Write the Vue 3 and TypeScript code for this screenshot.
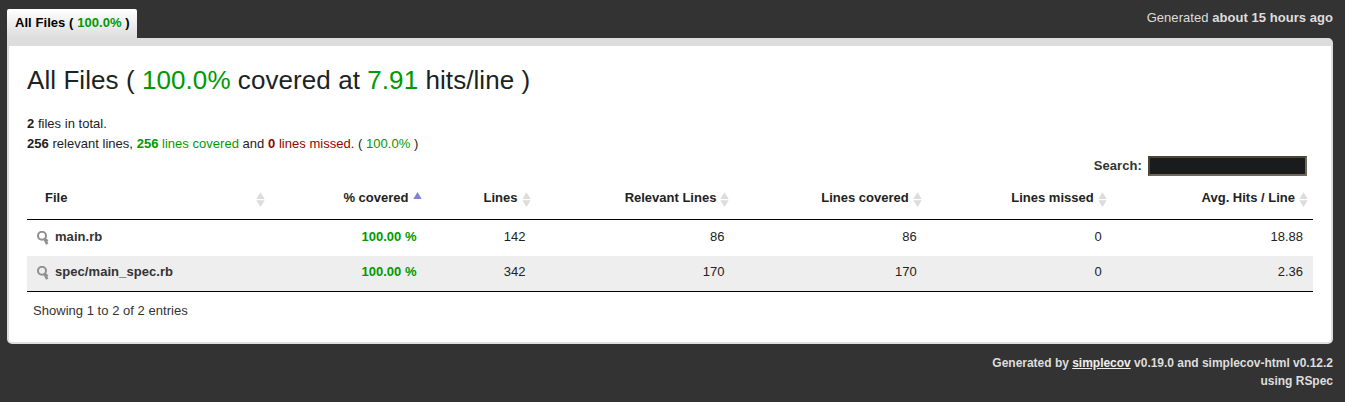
<script setup lang="ts">
interface Column {
  label: string
  width: number
  sorted?: boolean
}

interface FileRow {
  name: string
  covered: string
  values: string[]
}

const columns: Column[] = [
  { label: 'File', width: 243 },
  { label: '% covered', width: 156.5, sorted: true },
  { label: 'Lines', width: 109 },
  { label: 'Relevant Lines', width: 198.9 },
  { label: 'Lines covered', width: 192.25 },
  { label: 'Lines missed', width: 185 },
  { label: 'Avg. Hits / Line', width: 201.35 },
]

const gridColumns = columns.map((c) => `${c.width}px`).join(' ')

const rows: FileRow[] = [
  { name: 'main.rb', covered: '100.00 %', values: ['142', '86', '86', '0', '18.88'] },
  { name: 'spec/main_spec.rb', covered: '100.00 %', values: ['342', '170', '170', '0', '2.36'] },
]
</script>

<template>
  <div class="page">
    <header class="top">
      <a class="tab">All Files ( <span class="green">100.0%</span> )</a>
      <div class="timestamp">Generated <b>about 15 hours ago</b></div>
    </header>

    <main class="content">
      <h2>
        All Files ( <span class="green">100.0%</span> covered at
        <span class="green">7.91</span> hits/line )
      </h2>
      <div class="summary"><b>2</b> files in total.</div>
      <div class="summary">
        <b>256</b> relevant lines, <span class="green"><b>256</b> lines covered</span> and
        <span class="red"><b>0</b> lines missed.</span> ( <span class="green">100.0%</span> )
      </div>

      <label class="search">Search:<input type="text" /></label>

      <div class="table">
        <div class="row head" :style="{ gridTemplateColumns: gridColumns }">
          <div v-for="col in columns" :key="col.label" class="th">
            <span>{{ col.label }}</span>
            <svg v-if="col.sorted" class="sort" width="9" height="16" viewBox="0 0 9 16">
              <path d="M4.5 0 L8.7 7 H0.3 Z" fill="#7f83dc" />
            </svg>
            <svg v-else class="sort" width="9" height="16" viewBox="0 0 9 16">
              <path d="M4.5 0.2 L8.7 7 H0.3 Z M0.3 8.2 H8.7 L4.5 15 Z" fill="#dcdcdc" />
            </svg>
          </div>
        </div>
        <div
          v-for="row in rows"
          :key="row.name"
          class="row body"
          :style="{ gridTemplateColumns: gridColumns }"
        >
          <div class="file">
            <svg width="13" height="14" viewBox="0 0 13 14" fill="none" stroke="#909090">
              <circle cx="5" cy="4.8" r="4" stroke-width="2" />
              <path d="M7.4 7.4 L10.8 10" stroke-width="2" />
              <path d="M7.2 7.4 L10.2 13.2" stroke-width="2.6" />
            </svg>
            <b>{{ row.name }}</b>
          </div>
          <div class="td green"><b>{{ row.covered }}</b></div>
          <div v-for="(value, i) in row.values" :key="i" class="td">{{ value }}</div>
        </div>
      </div>

      <div class="info">Showing 1 to 2 of 2 entries</div>
    </main>

    <footer>
      Generated by <a>simplecov</a> v0.19.0 and simplecov-html v0.12.2<br />using RSpec
    </footer>
  </div>
</template>

<style>
body {
  margin: 0;
  background: #333;
}
</style>

<style scoped>
.page {
  box-sizing: border-box;
  height: 402px;
  padding: 9px 12px 0 7px;
  overflow: hidden;
  background: #333;
  color: #222;
  font: 13px/20px "Nimbus Sans", "Liberation Sans", Arial, sans-serif;
}
.top {
  display: flex;
  justify-content: space-between;
  height: 29px;
}
.tab {
  box-sizing: border-box;
  width: 130px;
  padding: 4px 0 0 8px;
  border-radius: 2px 2px 0 0;
  background: linear-gradient(#fff, #ddd);
  color: #000;
  font-weight: bold;
  letter-spacing: 0.06px;
  line-height: 19px;
  white-space: nowrap;
}
.timestamp {
  color: #ddd;
  letter-spacing: 0.05px;
  line-height: 18px;
}
.green {
  color: #090;
}
.red {
  color: #900;
}
.content {
  box-sizing: border-box;
  height: 306px;
  padding: 18px 18px 0;
  border: 2px solid #ddd;
  border-top-width: 8px;
  border-radius: 0 5px 5px 5px;
  background: #fff;
}
h2 {
  margin: 0 0 18px;
  color: #1b2324;
  font-size: 26px;
  font-weight: normal;
  letter-spacing: 0.07px;
  line-height: 32px;
}
.summary {
  height: 20px;
  letter-spacing: 0.025px;
}
.search {
  display: flex;
  align-items: center;
  justify-content: flex-end;
  gap: 6px;
  height: 20px;
  margin: 2px 6px 0 0;
  color: #333;
  font-weight: bold;
  letter-spacing: 0.08px;
}
input {
  box-sizing: border-box;
  width: 159px;
  height: 20px;
  padding: 0;
  border: 2px solid;
  border-color: #4a443b #71675a #71675a #4a443b;
  border-radius: 0;
  background: #191b1d;
  color: #ddd;
  outline: none;
}
.table {
  width: 1286px;
  border-bottom: 1px solid #000;
}
.row {
  display: grid;
}
.head {
  height: 43px;
  border-bottom: 1px solid #000;
  font-weight: bold;
}
.th {
  display: flex;
  align-items: flex-start;
  justify-content: flex-end;
  gap: 4px;
  padding: 12px 5px 0 18px;
}
.th:first-child {
  justify-content: space-between;
}
.sort {
  flex: none;
  margin-top: 4px;
}
.body {
  height: 36px;
}
.body:last-child {
  height: 35px;
  background: #eee;
}
.td {
  padding: 7px 10px 0 0;
  text-align: right;
}
.body:last-child .td,
.body:last-child .file {
  padding-top: 6px;
}
.file {
  display: flex;
  gap: 5px;
  padding: 7px 0 0 10px;
  color: #333;
  letter-spacing: 0.06px;
}
.file svg {
  flex: none;
  margin-top: 4px;
}
.info {
  padding: 9px 0 0 6px;
  color: #333;
  letter-spacing: 0.03px;
}
footer {
  padding-top: 10px;
  color: #ddd;
  font-size: 12px;
  font-weight: bold;
  letter-spacing: -0.015px;
  line-height: 18px;
  text-align: right;
}
footer a {
  color: #eee;
  text-decoration: underline;
}
</style>
